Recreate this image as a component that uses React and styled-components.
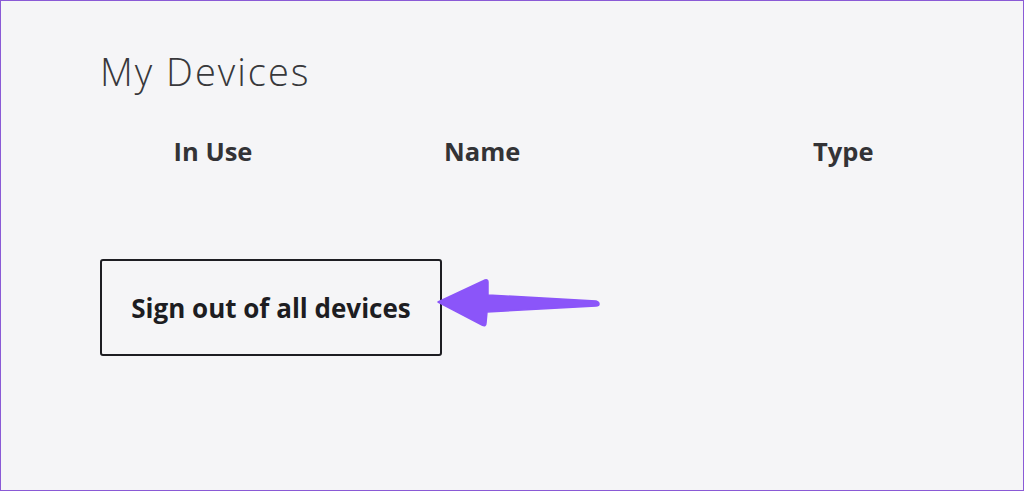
import React from "react";
import styled, { createGlobalStyle } from "styled-components";

const GlobalStyle = createGlobalStyle`
  html, body {
    margin: 0;
    padding: 0;
    background: #f5f5f7;
  }
  * {
    box-sizing: border-box;
  }
`;

const Frame = styled.div`
  position: relative;
  width: 1024px;
  height: 491px;
  border: 1.5px solid #8a5ad6;
  background: #f5f5f7;
  font-family: "Open Sans", Lato, sans-serif;
  color: #333336;
  padding: 42px 0 0 99px;
  overflow: hidden;
`;

const Title = styled.h1`
  margin: 0;
  font-size: 38px;
  font-weight: 300;
  line-height: 56px;
  letter-spacing: 2px;
  color: #38383b;
`;

const HeaderRow = styled.div`
  display: grid;
  grid-template-columns: 226px 370px auto;
  margin-top: 32px;
  height: 40px;
  align-items: center;
`;

const HeaderCell = styled.div`
  font-size: 25.5px;
  font-weight: 700;
  text-align: ${(p) => p.$align || "left"};
  padding-left: ${(p) => p.$indent || 0}px;
`;

const SignOutButton = styled.button`
  display: block;
  margin-top: 88px;
  width: 342px;
  height: 97px;
  border: 2.5px solid #1d1d22;
  border-radius: 3px;
  background: transparent;
  font-family: "Open Sans", Lato, sans-serif;
  font-size: 26px;
  font-weight: 700;
  color: #1d1d22;
  cursor: pointer;
`;

const Pointer = styled.svg`
  position: absolute;
  left: 0;
  top: 0;
  pointer-events: none;
`;

export default function App() {
  return (
    <>
      <GlobalStyle />
      <Frame>
        <Title>My Devices</Title>
        <HeaderRow>
          <HeaderCell $align="center">In Use</HeaderCell>
          <HeaderCell $indent={118}>Name</HeaderCell>
          <HeaderCell $indent={117}>Type</HeaderCell>
        </HeaderRow>
        <SignOutButton>Sign out of all devices</SignOutButton>
        <Pointer width="1024" height="491" viewBox="0 0 1024 491">
          <path
            d="M437 301 L484 279 Q487 278 487 281 L487 294 L595 300 Q598 301 598 303 Q598 305 595 305 L486 311 L485 322 Q485 326 481 324 Z"
            fill="#8b55f9"
            stroke="#8b55f9"
            strokeWidth="1.5"
            strokeLinejoin="round"
          />
        </Pointer>
      </Frame>
    </>
  );
}
